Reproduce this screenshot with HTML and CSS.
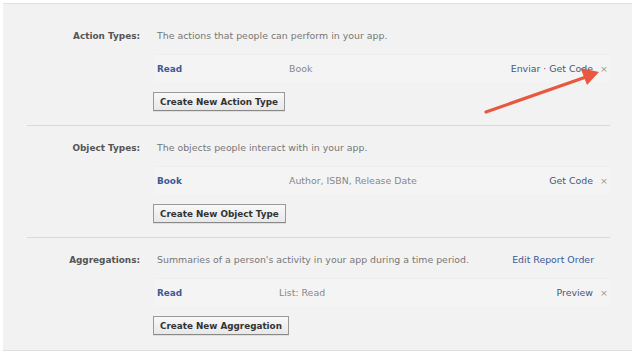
FILE: index.html
```html
<!DOCTYPE html>
<html>
  <head>
    <meta name="viewport" content="width=device-width, initial-scale=1.0">
    <title>Open Graph</title>
    <link rel="stylesheet" href="styles.css">
  </head>
  <body>
    <div class="panel">
      <div class="sxn sxn-first">
        <div class="sxn-label">Action Types:</div>
        <div class="sxn-body">
          <div class="sxn-head">
            <span class="desc">The actions that people can perform in your app.</span>
          </div>
          <div class="item">
            <a class="item-name" href="#">Read</a>
            <span class="item-detail">Book</span>
            <span class="item-links"><a href="#">Enviar</a> · <a href="#">Get Code</a></span>
            <span class="item-remove">&times;</span>
          </div>
          <button class="btn">Create New Action Type</button>
        </div>
      </div><!-- action types -->
      <div class="sxn">
        <div class="sxn-label">Object Types:</div>
        <div class="sxn-body">
          <div class="sxn-head">
            <span class="desc">The objects people interact with in your app.</span>
          </div>
          <div class="item">
            <a class="item-name" href="#">Book</a>
            <span class="item-detail">Author, ISBN, Release Date</span>
            <span class="item-links"><a href="#">Get Code</a></span>
            <span class="item-remove">&times;</span>
          </div>
          <button class="btn">Create New Object Type</button>
        </div>
      </div><!-- object types -->
      <div class="sxn sxn-last">
        <div class="sxn-label">Aggregations:</div>
        <div class="sxn-body">
          <div class="sxn-head">
            <span class="desc">Summaries of a person's activity in your app during a time period.</span>
            <a class="head-link" href="#">Edit Report Order</a>
          </div>
          <div class="item item-agg">
            <a class="item-name" href="#">Read</a>
            <span class="item-detail">List: Read</span>
            <span class="item-links"><a href="#">Preview</a></span>
            <span class="item-remove">&times;</span>
          </div>
          <button class="btn">Create New Aggregation</button>
        </div>
      </div><!-- aggregations -->
    </div>
    <svg class="arrow" width="640" height="358" viewBox="0 0 640 358">
      <line x1="486" y1="112" x2="586" y2="77" stroke="#e8583f" stroke-width="3.2" stroke-linecap="round"/>
      <polygon points="599,72 587,85 580.5,68" fill="#e8583f"/>
    </svg>
  </body>
</html>
```

FILE: styles.css
```css
html {
  background-color: #fff;
  font-family: 'DejaVu Sans', sans-serif;
  font-size: 9.4px;
  color: #777;
}
body {
  margin: 0;
  position: relative;
  height: 358px;
  overflow: hidden;
}
.panel {
  width: 629px;
  margin: 3px 0 0 3px;
  background-color: #f2f2f2;
  border-top: 1px solid #e0e0e0;
  border-bottom: 1px solid #dedede;
}
.sxn {
  display: flex;
  margin: 0 22px 0 24px;
  padding: 14px 0 14px 0;
  border-bottom: 1px solid #dadada;
}
.sxn-first {
  padding-top: 24px;
}
.sxn-last {
  border-bottom: 0;
  padding-bottom: 15px;
}
.sxn-label {
  width: 113px;
  flex: none;
  text-align: right;
  font-weight: bold;
  font-size: 8.9px;
  color: #555;
  line-height: 16px;
}
.sxn-body {
  flex: 1;
  margin-left: 15px;
  display: flex;
  flex-direction: column;
  align-items: flex-start;
}
.sxn-head {
  display: flex;
  justify-content: space-between;
  align-self: stretch;
  height: 16px;
  line-height: 16px;
  padding: 0 16px 0 2px;
  margin-bottom: 10px;
}
a {
  color: #3b5998;
  text-decoration: none;
}
.head-link {
  color: #3b5998;
}
.item {
  display: flex;
  align-items: center;
  align-self: stretch;
  height: 28px;
  padding: 0 4px 0 2px;
  background-color: #f4f4f4;
  border-top: 1px solid #ededed;
  box-sizing: border-box;
  margin-bottom: 10px;
}
.item-name {
  width: 132px;
  flex: none;
  font-weight: bold;
  font-size: 8.9px;
}
.item-agg .item-name {
  width: 122px;
}
.item-detail {
  flex: 1;
  color: #888;
}
.item-links {
  color: #44577f;
}
.item-links a {
  color: #44577f;
}
.item-remove {
  width: 6px;
  margin-left: 7px;
  color: #999;
  font-size: 9.5px;
  line-height: 6px;
}
.btn {
  margin-left: -2px;
  height: 19px;
  padding: 0 6px;
  font-family: 'DejaVu Sans', sans-serif;
  font-weight: bold;
  font-size: 8.8px;
  color: #333;
  background: linear-gradient(#f8f8f8, #e8e8e8);
  border: 1px solid #999;
  border-bottom-color: #888;
  box-shadow: 0 1px 0 rgba(0, 0, 0, .08);
}
.arrow {
  position: absolute;
  top: 0;
  left: 0;
  pointer-events: none;
}
```
